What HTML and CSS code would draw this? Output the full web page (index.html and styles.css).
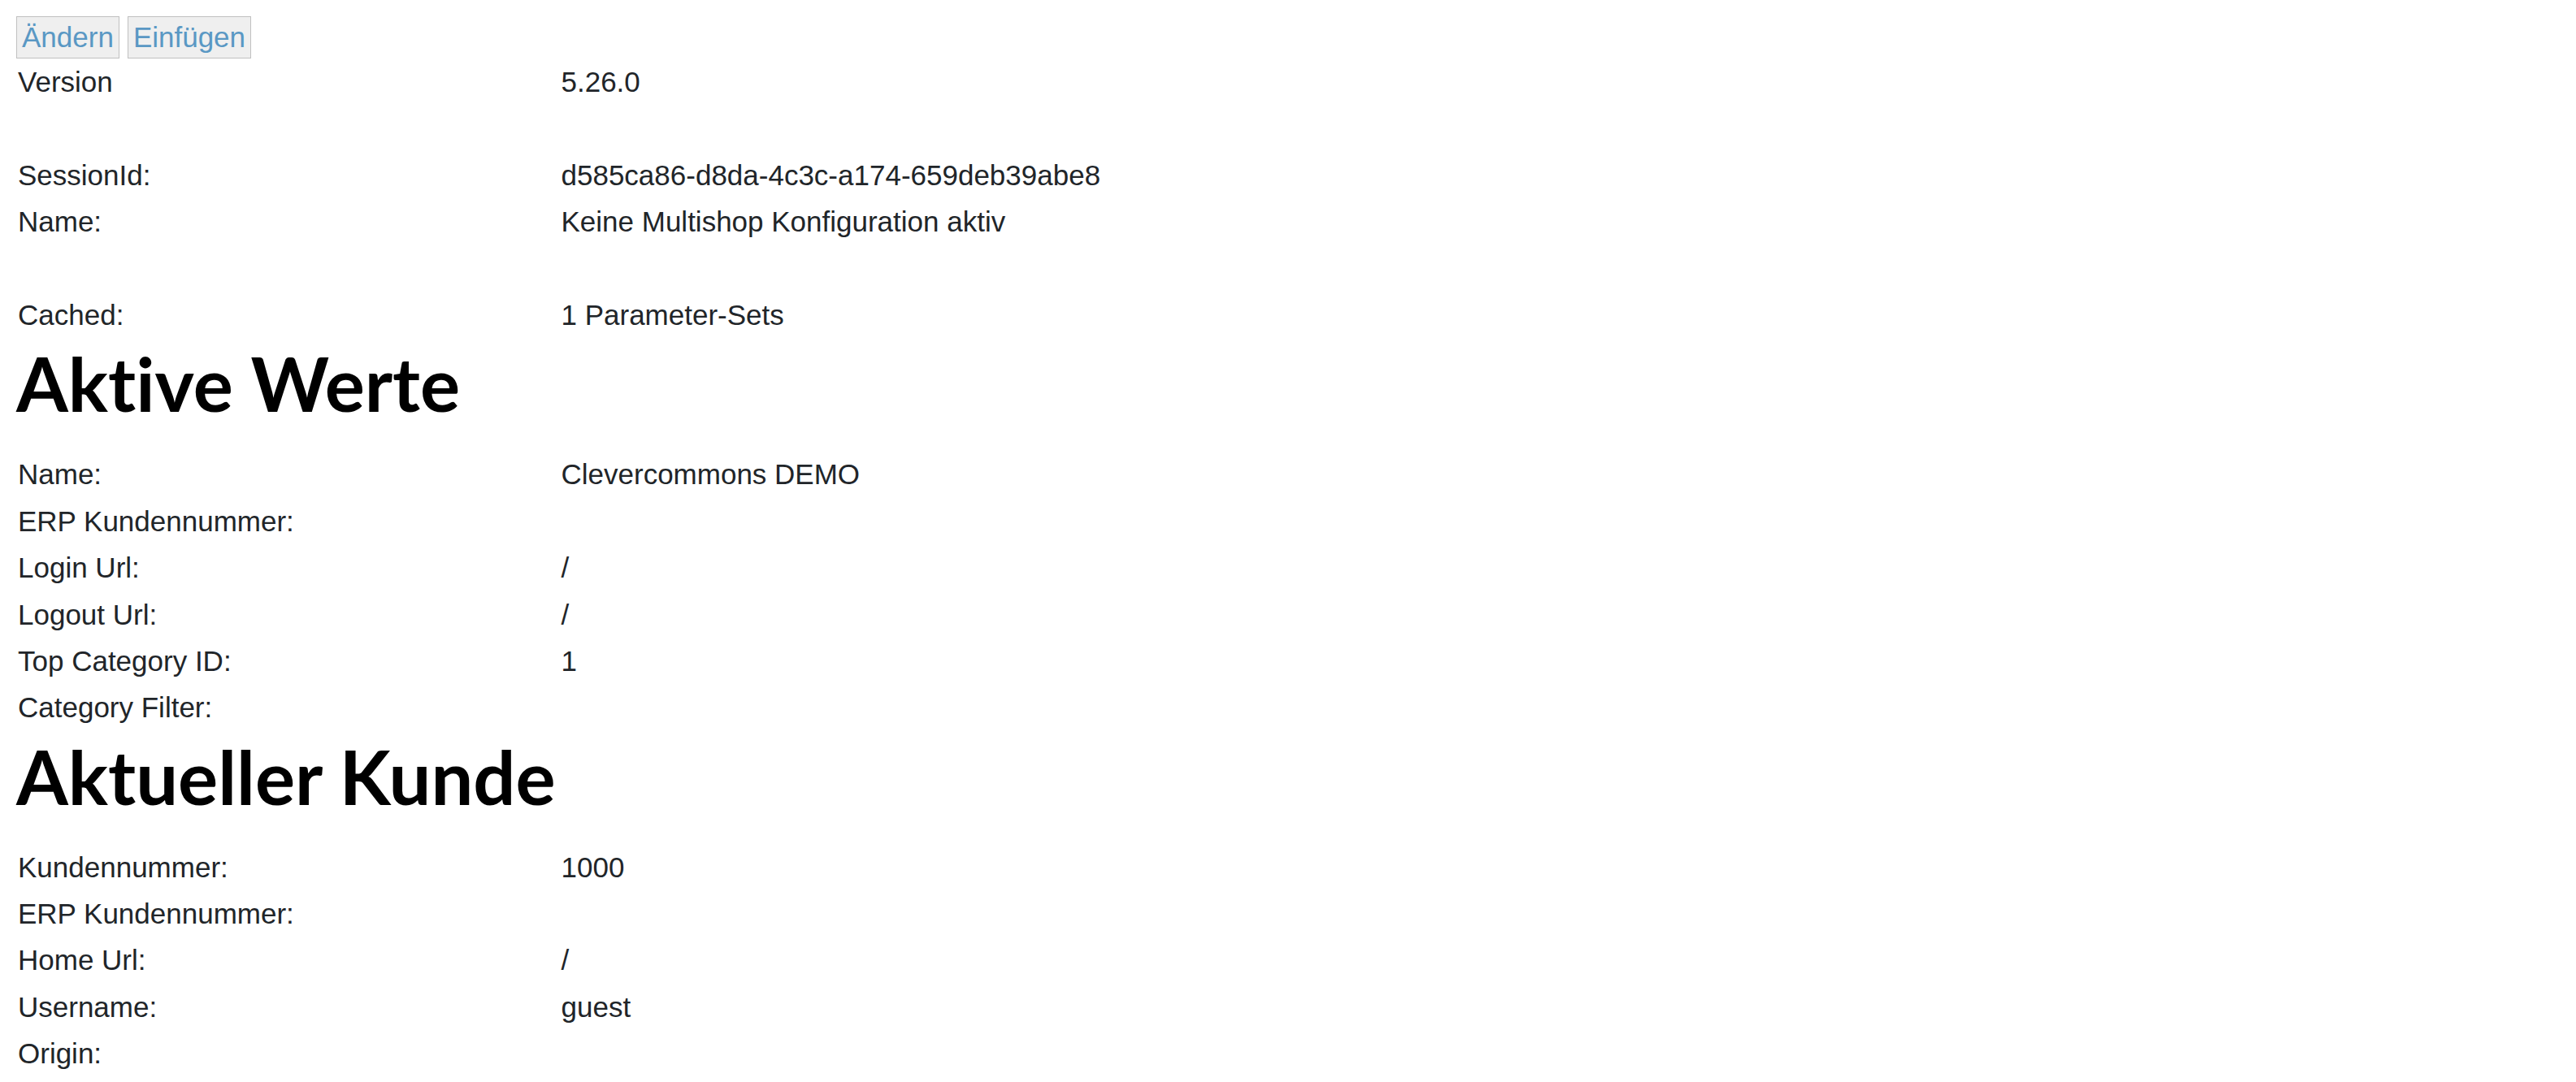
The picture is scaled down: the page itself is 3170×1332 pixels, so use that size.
FILE: index.html
```html
<!DOCTYPE html>
<html lang="de">
<head>
<meta charset="utf-8">
<title>Info</title>
<link rel="stylesheet" href="styles.css">
</head>
<body>
<div class="page">
  <div class="actions">
    <button class="btn" type="button">Ändern</button>
    <button class="btn" type="button">Einfügen</button>
  </div>
  <div class="table">
    <div class="row"><span class="label">Version</span><span class="value">5.26.0</span></div>
    <div class="row"><span class="label"></span><span class="value"></span></div>
    <div class="row"><span class="label">SessionId:</span><span class="value">d585ca86-d8da-4c3c-a174-659deb39abe8</span></div>
    <div class="row"><span class="label">Name:</span><span class="value">Keine Multishop Konfiguration aktiv</span></div>
    <div class="row"><span class="label"></span><span class="value"></span></div>
    <div class="row"><span class="label">Cached:</span><span class="value">1 Parameter-Sets</span></div>
  </div>
  <h1 class="heading">Aktive Werte</h1>
  <div class="table">
    <div class="row"><span class="label">Name:</span><span class="value">Clevercommons DEMO</span></div>
    <div class="row"><span class="label">ERP Kundennummer:</span><span class="value"></span></div>
    <div class="row"><span class="label">Login Url:</span><span class="value">/</span></div>
    <div class="row"><span class="label">Logout Url:</span><span class="value">/</span></div>
    <div class="row"><span class="label">Top Category ID:</span><span class="value">1</span></div>
    <div class="row"><span class="label">Category Filter:</span><span class="value"></span></div>
  </div>
  <h1 class="heading">Aktueller Kunde</h1>
  <div class="table">
    <div class="row"><span class="label">Kundennummer:</span><span class="value">1000</span></div>
    <div class="row"><span class="label">ERP Kundennummer:</span><span class="value"></span></div>
    <div class="row"><span class="label">Home Url:</span><span class="value">/</span></div>
    <div class="row"><span class="label">Username:</span><span class="value">guest</span></div>
    <div class="row"><span class="label">Origin:</span><span class="value"></span></div>
  </div>
</div>
</body>
</html>
```
FILE: styles.css
```css
html, body {
  margin: 0;
  padding: 0;
  background: #ffffff;
}

.page {
  padding: 19.5px 20px 0 20px;
  font-family: "Liberation Sans", Arial, sans-serif;
  font-size: 35px;
  color: #212529;
}

.actions {
  display: flex;
  gap: 10px;
  height: 52.6px;
  align-items: flex-start;
}

.btn {
  font-family: "Liberation Sans", Arial, sans-serif;
  font-size: 35px;
  line-height: 40.2px;
  padding: 5px 6px;
  margin: 0;
  border: 1px solid #c0c0c0;
  border-radius: 0;
  background: #efefef;
  color: #5a98c4;
  cursor: pointer;
}

.table {
  padding-left: 2px;
}

.row {
  display: grid;
  grid-template-columns: 668.5px 1fr;
  height: 57.4px;
  line-height: 57.4px;
  white-space: nowrap;
}

.heading {
  font-family: Lato, "Open Sans", sans-serif;
  font-weight: 700;
  font-size: 92px;
  line-height: 1.2;
  font-variant-ligatures: none;
  font-feature-settings: "liga" 0, "clig" 0;
  color: #000000;
  margin: 1px 0 27.5px 0;
}
```
